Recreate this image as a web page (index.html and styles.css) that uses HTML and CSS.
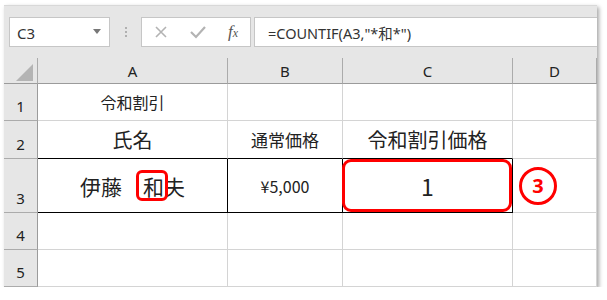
FILE: index.html
```html
<!DOCTYPE html>
<html lang="ja">
<head>
<meta charset="utf-8">
<title>COUNTIF</title>
<link rel="stylesheet" href="styles.css">
</head>
<body>
<div class="frame">
  <div class="toolbar">
    <div class="namebox"><span>C3</span><span class="caret"></span></div>
    <div class="dots"><i></i><i></i><i></i></div>
    <div class="btns">
      <svg class="ico" width="16" height="16" viewBox="0 0 16 16"><path d="M3 3 L13 13 M13 3 L3 13" stroke="#b3b3b3" stroke-width="1.6" fill="none"/></svg>
      <svg class="ico" width="18" height="16" viewBox="0 0 18 16"><path d="M2 8 L7 13 L16 3" stroke="#b3b3b3" stroke-width="2.2" fill="none"/></svg>
      <span class="fx">f<small>x</small></span>
    </div>
    <div class="formula">=COUNTIF(A3,"*和*")</div>
  </div>
  <div class="sheet">
    <div class="corner"><span class="tri"></span></div>
    <div class="ch">A</div>
    <div class="ch">B</div>
    <div class="ch">C</div>
    <div class="ch">D</div>

    <div class="rh">1</div>
    <div class="cell t16">令和割引</div>
    <div class="cell"></div>
    <div class="cell"></div>
    <div class="cell"></div>

    <div class="rh">2</div>
    <div class="cell t20 bb">氏名</div>
    <div class="cell t17 bb">通常価格</div>
    <div class="cell t20 bb">令和割引価格</div>
    <div class="cell"></div>

    <div class="rh">3</div>
    <div class="cell t21 box">伊藤　<span class="mark">和</span>夫</div>
    <div class="cell t16 box">¥5,000</div>
    <div class="cell t22 box red">1</div>
    <div class="cell left"><span class="num">3</span></div>

    <div class="rh">4</div>
    <div class="cell"></div>
    <div class="cell"></div>
    <div class="cell"></div>
    <div class="cell"></div>

    <div class="rh">5</div>
    <div class="cell"></div>
    <div class="cell"></div>
    <div class="cell"></div>
    <div class="cell"></div>
  </div>
</div>
</body>
</html>
```
FILE: styles.css
```css
* { box-sizing: border-box; }
html, body { margin: 0; padding: 0; background: #fff; }
body { padding: 5px 0 0 4px; font-family: "Noto Sans", "Noto Sans CJK JP", sans-serif; color: #222; }

.frame {
  width: 593px;
  height: 282px;
  background: #e6e6e6;
  border-top: 1px solid #d8d8d8;
  box-shadow: 2px 2px 4px rgba(0,0,0,0.35);
  overflow: hidden;
}

.toolbar {
  display: flex;
  align-items: center;
  height: 52px;
  padding: 11px 0 11px 5px;
}
.namebox {
  width: 101px;
  height: 30px;
  background: #fff;
  border: 1px solid #c6c6c6;
  display: flex;
  align-items: center;
  justify-content: space-between;
  padding: 2px 8px 0 7px;
  font-size: 15px;
  color: #333;
}
.caret {
  width: 0; height: 0;
  border-left: 4px solid transparent;
  border-right: 4px solid transparent;
  border-top: 5px solid #777;
  margin-top: -3px;
}
.dots {
  width: 31px;
  display: flex;
  flex-direction: column;
  align-items: center;
  gap: 2px;
}
.dots i { width: 2px; height: 2px; background: #b0b0b0; display: block; }
.btns {
  width: 110px;
  height: 30px;
  background: #fff;
  border: 1px solid #c6c6c6;
  display: flex;
  align-items: center;
  padding-left: 11px;
  gap: 20px;
}
.fx {
  font-family: "Liberation Serif", "DejaVu Serif", serif;
  font-style: italic;
  font-weight: 400;
  font-size: 17px;
  color: #555;
  margin-left: 1px;
}
.fx small { font-size: 12px; }
.formula {
  margin-left: 3px;
  flex: 1;
  height: 30px;
  background: #fff;
  border: 1px solid #c6c6c6;
  border-right: none;
  display: flex;
  align-items: center;
  padding: 1px 0 0 13px;
  font-size: 14.5px;
  color: #333;
}

.sheet {
  display: grid;
  grid-template-columns: 34px 190px 115px 170px 84px;
  grid-template-rows: 26px 37px 38px 54px 37px 37px;
  background: #fff;
}
.corner {
  background: #e6e6e6;
  border-right: 1px solid #ababab;
  border-bottom: 1px solid #9b9b9b;
  display: flex;
  align-items: flex-end;
  justify-content: flex-end;
  padding: 0 4px 2px 0;
}
.tri {
  width: 0; height: 0;
  border-left: 17px solid transparent;
  border-bottom: 17px solid #b4b4b4;
}
.ch {
  background: #e6e6e6;
  border-right: 1px solid #ababab;
  border-bottom: 1px solid #9b9b9b;
  display: flex;
  align-items: center;
  justify-content: center;
  font-size: 15px;
  color: #222;
}
.rh {
  background: #e6e6e6;
  border-right: 1px solid #9b9b9b;
  border-bottom: 1px solid #ababab;
  display: flex;
  align-items: flex-end;
  justify-content: center;
  padding-bottom: 4px;
  font-size: 15px;
  color: #222;
}
.cell {
  border-right: 1px solid #d4d4d4;
  border-bottom: 1px solid #d4d4d4;
  display: flex;
  align-items: center;
  justify-content: center;
  position: relative;
  font-family: "Noto Sans CJK JP", "Noto Sans", sans-serif;
  color: #222;
  white-space: nowrap;
}
.t16 { font-size: 16px; }
.t17 { font-size: 17px; }
.t20 { font-size: 20px; }
.t21 { font-size: 21px; }
.t22 { font-size: 23px; }
.bb { border-bottom-color: #000; }
.box { border-right-color: #000; border-bottom-color: #000; }
.red::after {
  content: "";
  position: absolute;
  left: -1px; top: 0; right: 0; bottom: 0;
  border: 3px solid #f00;
  border-radius: 9px;
}
.mark { position: relative; }
.mark::after {
  content: "";
  position: absolute;
  left: -7px; right: -4px; top: -1px; bottom: 0;
  border: 3px solid #f00;
  border-radius: 6px;
}
.left { justify-content: flex-start; padding-left: 6px; }
.num {
  width: 38px;
  height: 38px;
  border: 3px solid #f00;
  border-radius: 50%;
  color: #f00;
  font-weight: 700;
  font-size: 20px;
  display: flex;
  align-items: center;
  justify-content: center;
  font-family: "Noto Sans", sans-serif;
}
```
